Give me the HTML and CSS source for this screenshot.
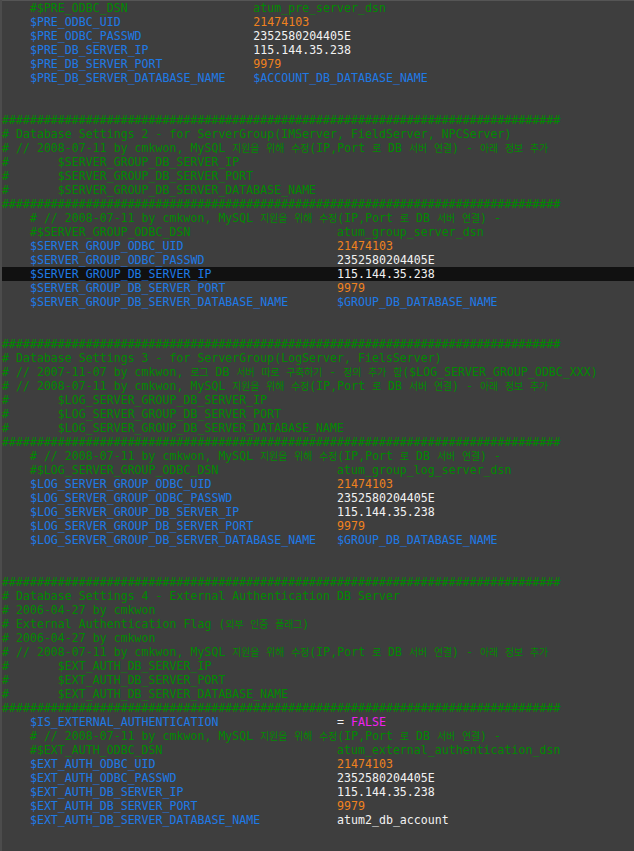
FILE: index.html
```html
<!DOCTYPE html>
<html lang="ko">
<head>
<meta charset="utf-8">
<title>config</title>
<link rel="stylesheet" href="styles.css">
</head>
<body>
<div class="editor">
<div class="ln"><span class="c">    #$PRE_ODBC_DSN                  atum_pre_server_dsn</span></div>
<div class="ln">    <span class="v">$PRE_ODBC_UID</span>                   <span class="n">21474103</span></div>
<div class="ln">    <span class="v">$PRE_ODBC_PASSWD</span>                <span class="s">2352580204405E</span></div>
<div class="ln">    <span class="v">$PRE_DB_SERVER_IP</span>               <span class="s">115.144.35.238</span></div>
<div class="ln">    <span class="v">$PRE_DB_SERVER_PORT</span>             <span class="n">9979</span></div>
<div class="ln">    <span class="v">$PRE_DB_SERVER_DATABASE_NAME</span>    <span class="v">$ACCOUNT_DB_DATABASE_NAME</span></div>
<div class="ln"> </div>
<div class="ln"> </div>
<div class="ln c">################################################################################</div>
<div class="ln c"># Database Settings 2 - for ServerGroup(IMServer, FieldServer, NPCServer)</div>
<div class="ln c"># // 2008-07-11 by cmkwon, MySQL <span class="k">지원을</span> <span class="k">위해</span> <span class="k">수정</span>(IP,Port <span class="k">로</span> DB <span class="k">서버</span> <span class="k">연결</span>) - <span class="k">아래</span> <span class="k">정보</span> <span class="k">추가</span></div>
<div class="ln c">#       $SERVER_GROUP_DB_SERVER_IP</div>
<div class="ln c">#       $SERVER_GROUP_DB_SERVER_PORT</div>
<div class="ln c">#       $SERVER_GROUP_DB_SERVER_DATABASE_NAME</div>
<div class="ln c">################################################################################</div>
<div class="ln c">    # // 2008-07-11 by cmkwon, MySQL <span class="k">지원을</span> <span class="k">위해</span> <span class="k">수정</span>(IP,Port <span class="k">로</span> DB <span class="k">서버</span> <span class="k">연결</span>) -</div>
<div class="ln c">    #$SERVER_GROUP_ODBC_DSN                     atum_group_server_dsn</div>
<div class="ln">    <span class="v">$SERVER_GROUP_ODBC_UID</span>                      <span class="n">21474103</span></div>
<div class="ln">    <span class="v">$SERVER_GROUP_ODBC_PASSWD</span>                   <span class="s">2352580204405E</span></div>
<div class="ln current">    <span class="v">$SERVER_GROUP_DB_SERVER_IP</span>                  <span class="s">115.144.35.238</span></div>
<div class="ln">    <span class="v">$SERVER_GROUP_DB_SERVER_PORT</span>                <span class="n">9979</span></div>
<div class="ln">    <span class="v">$SERVER_GROUP_DB_SERVER_DATABASE_NAME</span>       <span class="v">$GROUP_DB_DATABASE_NAME</span></div>
<div class="ln"> </div>
<div class="ln"> </div>
<div class="ln c">################################################################################</div>
<div class="ln c"># Database Settings 3 - for ServerGroup(LogServer, FielsServer)</div>
<div class="ln c"># // 2007-11-07 by cmkwon, <span class="k">로그</span> DB <span class="k">서버</span> <span class="k">따로</span> <span class="k">구축하기</span> - <span class="k">정의</span> <span class="k">추가</span> <span class="k">함</span>($LOG_SERVER_GROUP_ODBC_XXX)</div>
<div class="ln c"># // 2008-07-11 by cmkwon, MySQL <span class="k">지원을</span> <span class="k">위해</span> <span class="k">수정</span>(IP,Port <span class="k">로</span> DB <span class="k">서버</span> <span class="k">연결</span>) - <span class="k">아래</span> <span class="k">정보</span> <span class="k">추가</span></div>
<div class="ln c">#       $LOG_SERVER_GROUP_DB_SERVER_IP</div>
<div class="ln c">#       $LOG_SERVER_GROUP_DB_SERVER_PORT</div>
<div class="ln c">#       $LOG_SERVER_GROUP_DB_SERVER_DATABASE_NAME</div>
<div class="ln c">################################################################################</div>
<div class="ln c">    # // 2008-07-11 by cmkwon, MySQL <span class="k">지원을</span> <span class="k">위해</span> <span class="k">수정</span>(IP,Port <span class="k">로</span> DB <span class="k">서버</span> <span class="k">연결</span>) -</div>
<div class="ln c">    #$LOG_SERVER_GROUP_ODBC_DSN                 atum_group_log_server_dsn</div>
<div class="ln">    <span class="v">$LOG_SERVER_GROUP_ODBC_UID</span>                  <span class="n">21474103</span></div>
<div class="ln">    <span class="v">$LOG_SERVER_GROUP_ODBC_PASSWD</span>               <span class="s">2352580204405E</span></div>
<div class="ln">    <span class="v">$LOG_SERVER_GROUP_DB_SERVER_IP</span>              <span class="s">115.144.35.238</span></div>
<div class="ln">    <span class="v">$LOG_SERVER_GROUP_DB_SERVER_PORT</span>            <span class="n">9979</span></div>
<div class="ln">    <span class="v">$LOG_SERVER_GROUP_DB_SERVER_DATABASE_NAME</span>   <span class="v">$GROUP_DB_DATABASE_NAME</span></div>
<div class="ln"> </div>
<div class="ln"> </div>
<div class="ln c">################################################################################</div>
<div class="ln c"># Database Settings 4 - External Authentication DB Server</div>
<div class="ln c"># 2006-04-27 by cmkwon</div>
<div class="ln c"># External Authentication Flag (<span class="k">외부</span> <span class="k">인증</span> <span class="k">플래그</span>)</div>
<div class="ln c"># 2006-04-27 by cmkwon</div>
<div class="ln c"># // 2008-07-11 by cmkwon, MySQL <span class="k">지원을</span> <span class="k">위해</span> <span class="k">수정</span>(IP,Port <span class="k">로</span> DB <span class="k">서버</span> <span class="k">연결</span>) - <span class="k">아래</span> <span class="k">정보</span> <span class="k">추가</span></div>
<div class="ln c">#       $EXT_AUTH_DB_SERVER_IP</div>
<div class="ln c">#       $EXT_AUTH_DB_SERVER_PORT</div>
<div class="ln c">#       $EXT_AUTH_DB_SERVER_DATABASE_NAME</div>
<div class="ln c">################################################################################</div>
<div class="ln">    <span class="v">$IS_EXTERNAL_AUTHENTICATION</span>                 <span class="s">=</span> <span class="kw">FALSE</span></div>
<div class="ln c">    # // 2008-07-11 by cmkwon, MySQL <span class="k">지원을</span> <span class="k">위해</span> <span class="k">수정</span>(IP,Port <span class="k">로</span> DB <span class="k">서버</span> <span class="k">연결</span>) -</div>
<div class="ln c">    #$EXT_AUTH_ODBC_DSN                         atum_external_authentication_dsn</div>
<div class="ln">    <span class="v">$EXT_AUTH_ODBC_UID</span>                          <span class="n">21474103</span></div>
<div class="ln">    <span class="v">$EXT_AUTH_ODBC_PASSWD</span>                       <span class="s">2352580204405E</span></div>
<div class="ln">    <span class="v">$EXT_AUTH_DB_SERVER_IP</span>                      <span class="s">115.144.35.238</span></div>
<div class="ln">    <span class="v">$EXT_AUTH_DB_SERVER_PORT</span>                    <span class="n">9979</span></div>
<div class="ln">    <span class="v">$EXT_AUTH_DB_SERVER_DATABASE_NAME</span>           <span class="s">atum2_db_account</span></div>
<div class="ln"> </div>
<div class="ln"> </div>
</div>
</body>
</html>
```
FILE: styles.css
```css
html, body {
  margin: 0;
  padding: 0;
  background: #3e3e3e;
  overflow: hidden;
  height: 851px;
}
.editor {
  border-left: 2px solid #4c4c4c;
  box-shadow: inset 0 1px 0 #555555;
  padding-top: 1px;
  min-height: 850px;
  font-family: "DejaVu Sans Mono", "Liberation Mono", monospace;
  font-size: 11.6px;
  color: #f2f2f2;
}
.ln {
  height: 14px;
  line-height: 14px;
  white-space: pre;
  overflow: hidden;
}
.current {
  background: #111111;
}
.c { color: #008a00; }
.v { color: #1e7ae6; }
.n { color: #f0821e; }
.s { color: #f2f2f2; }
.kw { color: #f020f0; }
.k {
  font-family: "Noto Sans CJK KR", sans-serif;
  font-size: 10px;
  letter-spacing: -0.2px;
}
```
